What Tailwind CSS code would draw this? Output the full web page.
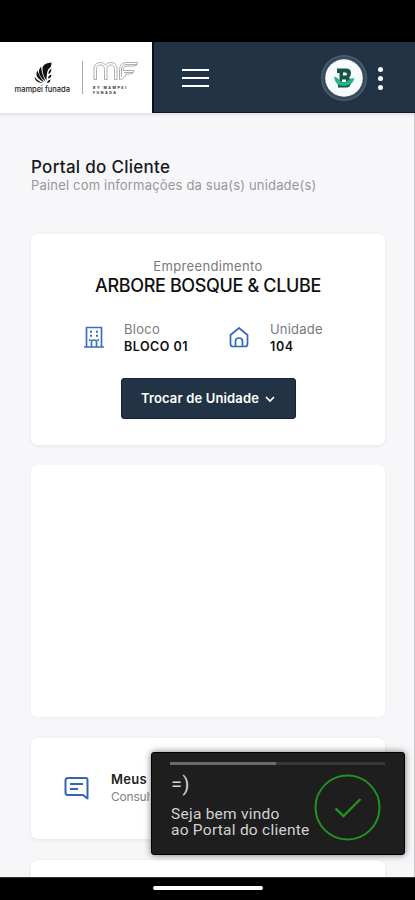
<!DOCTYPE html>
<html lang="pt-BR">
<head>
<meta charset="utf-8">
<title>Portal do Cliente</title>
<script src="https://cdn.jsdelivr.net/npm/@tailwindcss/browser@4"></script>
</head>
<body class="w-[415px] h-[900px] overflow-hidden bg-black font-['Inter',sans-serif]">
<div class="relative flex flex-col w-full h-[900px]">
  <div class="h-[42px] shrink-0 bg-black"></div>
  <header class="flex h-[71px] shrink-0 bg-[#213345] border-b border-[#10172a]">
    <div class="flex w-[154px] h-[71px] shrink-0 bg-white border-r-2 border-[#0c1018]">
      <svg class="w-[152px] h-[71px]" viewBox="0 0 152 71">
        <g fill="#111">
          <path d="M51.500 20.500Q41.500 21 42.500 28Q43 34 46.500 38.500Q46.500 30 48.500 27Q51.500 25.500 51.500 20.500Z"/>
          <path d="M41 24.500Q37.500 29 40 33.500Q42 37 45.500 39.500Q41.500 31 41 24.500Z"/>
          <path d="M37.500 28.500Q35 33 38.500 36.500Q41 39 44 40Q39 34 37.500 28.500Z"/>
          <path d="M34.500 34.500Q34.500 40.500 43 41Q37 38.500 34.500 34.500Z"/>
          <path d="M51.500 26.500Q48 29 48.500 32Q51 31.500 51.500 26.500ZM51.500 32.500Q48 33.500 48 36.500Q51.500 36 51.500 32.500ZM50.500 37.500Q47.500 38 47 41Q50 41 50.500 37.500Z"/>
        </g>
        <text x="14.500" y="49.500" font-size="7.5" font-weight="500" textLength="55.500" lengthAdjust="spacingAndGlyphs" fill="#222">mampei funada</text>
        <path d="M82.500 19V52" stroke="#aaa"/>
        <g fill="none" stroke="#9a9a9a" stroke-width=".8">
          <path d="M94 37.500V27Q94 20.500 100.500 20.500Q104 20.500 105.500 23Q107 20.500 111 20.500Q117 20.500 117 27V37.500H114.500V27.500Q114.500 23 111 23Q107 23 107 27.500V37.500H104.500V27.500Q104.500 23 100.500 23Q96.500 23 96.500 27.500V37.500Z"/>
          <path d="M119.500 37.500V28Q119.500 20.500 127 20.500H137.500Q137.500 24 134 24H128Q123 24 123 28.500H134Q134 32 130 32H126Q124 37.500 119.500 37.500Z"/>
          <path d="M121.500 35V27Q122 22.500 127 22.500H137M124 30.500H133"/>
        </g>
        <text x="93" y="46.800" font-size="3.6" font-weight="800" textLength="33" fill="#444">BY MAMPEI</text>
        <text x="93" y="52.300" font-size="3.6" font-weight="800" textLength="23" fill="#444">FUNADA</text>
      </svg>
    </div>
    <div class="flex flex-1 items-center pl-[28px] pr-[32px]">
      <div class="flex flex-col gap-[6px] w-[27px] mt-[2px]">
        <div class="h-[2px] bg-white"></div><div class="h-[2px] bg-white"></div><div class="h-[2px] bg-white"></div>
      </div>
      <svg class="w-[48px] h-[48px] ml-auto mt-[2px]" viewBox="0 0 48 48">
        <circle cx="24" cy="24" r="22.300" fill="#3a4a5e" stroke="#4f5d6f" stroke-width="1.500"/>
        <circle cx="24" cy="24" r="18.800" fill="#f6fbfb"/>
        <path fill-rule="evenodd" d="M17 14.500H26Q31 14.500 31 19Q31 22 29 23.500Q31 25 31 28Q31 33.500 26 33.500H18V29H19.500V19H17ZM23 18.500V21.500H25.500Q27 21.500 27 20Q27 18.500 25.500 18.500Z" fill="#185347"/>
        <path d="M22 25.500H26V28H22Z" fill="#f6fbfb"/>
        <path d="M14 22.500Q18 23.500 21 27.500Q24.500 29.500 28 26.500Q31 23.500 34.500 24.500Q32 32 24 32Q15 32 14 22.500Z" fill="#20b486"/>
      </svg>
      <div class="flex flex-col gap-[4px] ml-[10px] mt-[3px]">
        <div class="size-[5px] rounded-full bg-white"></div><div class="size-[5px] rounded-full bg-white"></div><div class="size-[5px] rounded-full bg-white"></div>
      </div>
    </div>
  </header>
  <main class="h-[764px] shrink-0 overflow-hidden bg-[#f7f7fa] border-r border-[#c9cacd] pl-[31px] shadow-[inset_0_5px_4px_-4px_#d5d6db]">
    <div class="h-[121px] pt-[43px]">
      <h1 class="text-[17px] leading-[22px] font-medium tracking-[0.28px] text-[#17191c] whitespace-nowrap">Portal do Cliente</h1>
      <p class="text-[13px] leading-[15px] tracking-[0.18px] text-[#969799] whitespace-nowrap">Painel com informações da sua(s) unidade(s)</p>
    </div>
    <section class="flex flex-col items-center h-[211px] w-[354px] bg-white rounded-[7px] shadow-[0_1px_4px_#00000014] pt-[24px]">
      <p class="text-[13px] leading-[17px] tracking-[0.36px] text-[#77797c]">Empreendimento</p>
      <h2 class="text-[18px] leading-[22px] font-medium tracking-[-0.35px] text-[#111] whitespace-nowrap">ARBORE BOSQUE &amp; CLUBE</h2>
      <div class="flex w-full mt-[24px] h-[36px]">
        <svg class="w-[22px] h-[24px] ml-[52px] mt-[4px]" viewBox="0 0 22 24" fill="none" stroke="#3b6fbd" stroke-width="1.700">
          <path d="M1 22H21M3.500 22V2.500H18.500V22M8.500 22V16.500Q8.500 15 11 15Q13.500 15 13.500 16.500V22"/>
          <path d="M7 6.800H9M13 6.800H15M7 10.800H9M13 10.800H15M6 15H7.500M14.500 15H16" stroke-width="2"/>
        </svg>
        <div class="ml-[19px] w-[102px] text-[13px] leading-[17px]"><p class="tracking-[0.3px] text-[#77797c]">Bloco</p><p class="font-semibold text-[#111] text-[12.5px] tracking-[0.5px]">BLOCO 01</p></div>
        <svg class="w-[22px] h-[24px] ml-[2px] mt-[4px]" viewBox="0 0 22 24" fill="none" stroke="#2f69bd" stroke-width="1.700" stroke-linejoin="round">
          <path d="M2.500 10L11 3L19.500 10V19Q19.500 21.500 17 21.500H5Q2.500 21.500 2.500 19Z"/>
          <path d="M7.500 21V16Q7.500 13 11 13Q14.500 13 14.500 16V21"/>
        </svg>
        <div class="ml-[20px] text-[13px] leading-[17px]"><p class="tracking-[0.2px] text-[#77797c]">Unidade</p><p class="font-semibold text-[#111] text-[12.5px] tracking-[0.6px]">104</p></div>
      </div>
      <button class="flex shrink-0 items-center justify-center gap-[6px] mt-[21px] w-[175px] h-[41px] rounded-[3px] border border-[#12213a] bg-[#213345] text-white text-[13px] tracking-[0.15px] font-semibold whitespace-nowrap">
        <span>Trocar de Unidade</span>
        <svg class="w-[10px] h-[7px] mt-[2px]" viewBox="0 0 10 7" fill="none" stroke="#fff" stroke-width="1.700"><path d="M1 1L5 5L9 1"/></svg>
      </button>
    </section>
    <section class="h-[252px] w-[354px] mt-[20px] bg-white rounded-[7px] shadow-[0_1px_3px_#0000000a]"></section>
    <section class="flex h-[101px] w-[354px] mt-[21px] bg-white rounded-[7px] shadow-[0_1px_4px_#00000014]">
      <svg class="w-[25px] h-[25px] ml-[32.500px] mt-[37.500px]" viewBox="0 0 25 25" fill="none" stroke="#3265b6" stroke-width="2" stroke-linejoin="round">
        <path d="M4 2H21.500Q23.500 2 23.500 4V22.500L19 19H4Q1.500 19 1.500 16.500V4.500Q1.500 2 4 2Z"/><path d="M6 8H19M6 13H14"/>
      </svg>
      <div class="ml-[22.500px] mt-[33px] w-[39px] overflow-hidden whitespace-nowrap"><p class="text-[13px] leading-[17px] font-semibold tracking-[0.3px] text-[#222]">Meus A</p><p class="text-[12px] leading-[17px] tracking-[-0.2px] text-[#808285]">Consult</p></div>
    </section>
    <section class="h-[101px] w-[354px] mt-[21px] bg-white rounded-[7px] shadow-[0_1px_4px_#00000014]"></section>
  </main>
  <footer class="flex justify-center h-[23px] shrink-0 bg-black border-t border-[#333] pt-[8px]">
    <div class="w-[110px] h-[4px] rounded-full bg-white"></div>
  </footer>
  <div class="absolute left-[151px] top-[752px] w-[254px] h-[103px] rounded-[3px] bg-[#1e1e1e] border-[1.5px] border-black shadow-[0_0_7px_#0008] px-[18px] pt-[9px] font-['Roboto',sans-serif] text-[#d2d2d2]">
    <div class="w-[215px] h-[3px] bg-[#383838]"><div class="w-[106px] h-[3px] bg-[#6b6b6b]"></div></div>
    <div class="flex">
      <div class="w-[144px] pl-px whitespace-nowrap">
        <p class="text-[20px] leading-[22px] mt-[8px] tracking-[0.5px]">=)</p>
        <p class="text-[15.500px] leading-[15.500px] mt-[12px] tracking-[0.25px]">Seja bem vindo<br>ao Portal do cliente</p>
      </div>
      <svg class="w-[68px] h-[68px] mt-[8px] shrink-0" viewBox="0 0 68 68" fill="none" stroke="#209220" stroke-width="2"><circle cx="33.500" cy="34.500" r="32"/><path d="M21.500 35.500L29.500 43L46.500 26" stroke-width="2.400"/></svg>
    </div>
  </div>
</div>
</body>
</html>
